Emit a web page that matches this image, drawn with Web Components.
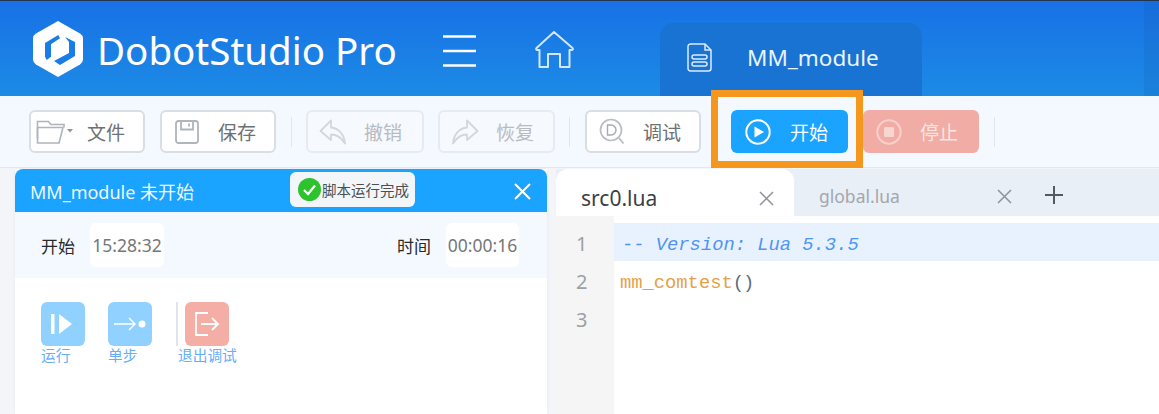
<!DOCTYPE html>
<html lang="zh"><head><meta charset="utf-8"><title>DobotStudio Pro</title>
<style>
html,body{margin:0;padding:0;height:414px;overflow:hidden;background:#f3f5f8;font-family:"Noto Sans","Noto Sans CJK SC",sans-serif}
</style></head><body>
<app-shell></app-shell>
<script>
const FONT='"Noto Sans","Noto Sans CJK SC",sans-serif';
function el(name,css,html){
  customElements.define(name,class extends HTMLElement{
    connectedCallback(){
      if(this.shadowRoot)return;
      const r=this.attachShadow({mode:'open'});
      r.innerHTML='<style>'+css+'</style>'+(typeof html==='function'?html(this):html);
    }
  });
}
const icons={
 folder:'<svg width="44" height="30" viewBox="0 0 44 30" fill="none"><path d="M1.500 22V4.500h11l2.500 3H28v3" stroke="#aeb4bc" stroke-width="1.600"/><path d="M1.500 26.500V10.500H27l-4 15.500H1.500" stroke="#aeb4bc" stroke-width="1.600" stroke-linejoin="round"/><path d="M31 12h6l-3 3.500z" fill="#8f959c"/></svg>',
 save:'<svg width="24" height="24" viewBox="0 0 24 24" fill="none"><rect x="1" y="1" width="22" height="22" rx="2.500" stroke="#b0b5bc" stroke-width="1.800"/><path d="M6 1v8.500h12V1M14 3.500v3" stroke="#b0b5bc" stroke-width="1.800"/></svg>',
 undo:'<svg width="28" height="26" viewBox="0 0 28 26" fill="none"><path d="M12 1.500L1.500 12 12 21v-5.500c5.500 0 10 2.500 14 9-.5-8-6-15.500-14-16z" stroke="#d3d7dc" stroke-width="1.800" stroke-linejoin="round"/></svg>',
 redo:'<svg width="28" height="26" viewBox="0 0 28 26" fill="none"><path d="M16 1.500L26.500 12 16 21v-5.500c-5.500 0-10 2.500-14 9 .5-8 6-15.500 14-16z" stroke="#d3d7dc" stroke-width="1.800" stroke-linejoin="round"/></svg>',
 debug:'<svg width="26" height="28" viewBox="0 0 26 28" fill="none"><circle cx="12" cy="12" r="10.500" stroke="#b9bdc3" stroke-width="1.700"/><path d="M20 20l4.500 5.500" stroke="#b9bdc3" stroke-width="1.800"/><path d="M8.500 7H12a5 5 0 0 1 0 10H8.500z" stroke="#a4a9b0" stroke-width="1.400"/></svg>',
 play:'<svg width="26" height="26" viewBox="0 0 26 26" fill="none"><circle cx="13" cy="13" r="11.700" stroke="#fff" stroke-width="2"/><path d="M9.500 7.500l9.500 5.500-9.500 5.500z" fill="#fff"/></svg>',
 stop:'<svg width="26" height="26" viewBox="0 0 26 26" fill="none"><circle cx="13" cy="13" r="11.700" stroke="#f7d0cb" stroke-width="2"/><rect x="8" y="8" width="10" height="10" rx="1" fill="#f7d5d1"/></svg>'
};
el('tool-button',`
:host{display:flex;box-sizing:border-box;width:var(--w,116px);height:43px;flex:none;align-items:center;border:2px solid #d9dde4;border-radius:6px;background:#fff;color:#6d7074;font:19px ${FONT};overflow:hidden}
:host([kind=ghost]){background:#f6f9fd;border-color:#e7ebf1;color:#b8bcc1}
:host([kind=go]){background:#1aa3ff;border:0;color:#fff}
:host([kind=halt]){background:#f1aca5;border:0;color:#fbe6e3}
.i{flex:none;width:var(--iw,56px);padding-right:6px;display:flex;justify-content:center;align-items:center;box-sizing:border-box}
:host([icon=folder]) .i{width:50px;justify-content:flex-start;padding:0 0 0 5px}
.t{flex:1;white-space:nowrap}
:host([icon=folder]) .t{padding-left:6px}
`,h=>`<span class="i">${icons[h.getAttribute('icon')]}</span><span class="t"><slot></slot></span>`);
el('tool-sep',`:host{display:block;width:1px;height:30px;background:#e2e6ec;flex:none}`,'');
el('top-bar',`
:host{display:flex;box-sizing:border-box;height:96px;align-items:stretch;padding-top:1px;background:linear-gradient(#1871e6,#1c8be5);border-top:1px solid #24344d;position:relative;color:#fff}
.logo{margin:19px 0 0 33px;flex:none;width:50px;height:56px}
.name{margin:20px 0 0 14px;font-size:38.500px;line-height:56px;width:301px;white-space:nowrap}
.menu{margin:33px 0 0 45px;width:33px;height:32px;flex:none}
.home{margin:28px 0 0 58px;width:40px;height:40px;flex:none}
.tab{margin:21px 0 0 86px;width:262px;flex:none;background:#1873d2;border-radius:14px 14px 0 0;display:flex;align-items:center;padding-bottom:4px;box-sizing:border-box}
.tab svg{margin-left:27px;flex:none}
.tab span{margin-left:35px;font-size:22.500px;color:#eaf3fd}
.edge{position:absolute;right:0;top:0;bottom:0;width:15px;background:rgba(20,90,170,.18)}
`,`<svg class="logo" viewBox="0 0 50 56"><path fill="#fff" d="M25 0l22 12.500q3 1.800 3 5v21q0 3.200-3 5L25 56 3 43.500q-3-1.800-3-5v-21q0-3.200 3-5z"/><path fill="#1a7ce6" d="M12 22L25.300 14 27 17.300 18 23.300V35.700L13.700 39 12 35.700zM32 16L42 21V35L27 44 21 40 36 32V21z"/></svg>
<div class="name">DobotStudio Pro</div>
<svg class="menu" viewBox="0 0 33 32"><path d="M0 1.500h33M0 16h33M0 30.500h33" stroke="#fff" stroke-width="2.600"/></svg>
<svg class="home" viewBox="0 0 40 40" fill="none" stroke="#d5e7fc" stroke-width="2" stroke-linejoin="round"><path d="M20 2L2.500 18q-1 2 1 2H5.500V37H14V24H26V37H35.500V20H37.500q2 0 1-2z"/></svg>
<div class="tab"><svg width="25" height="29" viewBox="0 0 25 29" fill="none" stroke="#dcebfb" stroke-width="1.500"><path d="M3.500 1h14.500l6 6v18.500a2.500 2.500 0 0 1-2.500 2.500H3.500A2.500 2.500 0 0 1 1 25.500v-22A2.500 2.500 0 0 1 3.500 1z"/><path d="M18 1v6h6"/><rect x="5" y="12" width="15" height="4" rx="2"/><rect x="5" y="19" width="15" height="4" rx="2"/></svg><span>MM_module</span></div>
<div class="edge"></div>`);
el('tool-bar',`
:host{display:flex;box-sizing:border-box;height:72px;background:#f3f9ff;padding:14px 0 0 29px;align-items:flex-start;gap:15px;position:relative;z-index:1;border-bottom:1px solid #e4e8ee}
.box{position:absolute;left:711px;top:-6px;width:152px;height:78px;box-sizing:border-box;border:7px solid #f6971d;pointer-events:none}
tool-sep{margin-top:7px}
`,`<tool-button icon="folder">文件</tool-button><tool-button icon="save">保存</tool-button><tool-sep></tool-sep>
<tool-button icon="undo" kind="ghost" style="--w:118px;margin-left:-1px">撤销</tool-button><tool-button icon="redo" kind="ghost" style="--w:117px;margin-left:-1px">恢复</tool-button><tool-sep style="margin-left:-1px"></tool-sep>
<tool-button icon="debug">调试</tool-button><tool-button icon="play" kind="go" style="--w:117px;margin-left:15px;--iw:59px">开始</tool-button><tool-button icon="stop" kind="halt" style="--w:116px;--iw:57px">停止</tool-button><tool-sep></tool-sep>
<div class="box"></div>`);
el('run-action',`
:host{display:flex;flex-direction:column;flex:none;color:#66adf8;font:14.700px/17px ${FONT};white-space:nowrap}
:host([danger]){align-items:center}
.b{width:44px;height:44px;border-radius:6px;background:#91d1ff;display:flex;align-items:center;justify-content:center;margin-bottom:1px}
:host([danger]) .b{background:#f5aea6}
`,`<div class="b"><slot name="i"></slot></div><slot></slot>`);
el('debug-panel',`
:host{display:flex;flex-direction:column;flex:none;width:532px;background:#fff;box-shadow:0 0 3px #e4e8ee}
.head{height:43px;background:#1aa3ff;border-radius:8px 8px 0 0;display:flex;align-items:center;color:#eef8ff;position:relative;box-sizing:border-box;padding-left:15px;font-size:18px;white-space:nowrap}
.toast{position:absolute;left:275px;top:3px;width:125px;height:35px;box-sizing:border-box;background:#f3f6f9;border-radius:6px;display:flex;align-items:center;padding-left:8px;color:#4c4f52;font-size:14.500px;white-space:nowrap}
.toast svg{flex:none;margin-right:1px}
.x{position:absolute;left:499px;top:14px}
.info{height:66px;background:#f3f9ff;display:flex;align-items:center;box-sizing:border-box;padding:0 0 0 26px;font-size:17px;color:#2a2a2a}
.v{background:#fff;border-radius:6px;height:44px;width:74px;display:flex;align-items:center;justify-content:center;color:#74777b;font-size:17.500px;margin-left:15px;white-space:nowrap}
.gap{flex:1}
.v.e{margin:0 28px 0 15px;width:73px}
.act{display:flex;padding:24px 0 0 26px;height:114px;box-sizing:border-box;align-items:flex-start}
.s{width:2px;height:44px;background:#e0e5eb;flex:none}
`,`<div class="head">MM_module 未开始
<div class="toast"><svg width="23" height="23" viewBox="0 0 23 23"><circle cx="11.500" cy="11.500" r="11.500" fill="#2dc32d"/><path d="M6 12l4 4 7-8.500" fill="none" stroke="#fff" stroke-width="2.200"/></svg>脚本运行完成</div>
<svg class="x" width="17" height="17" viewBox="0 0 17 17"><path d="M1 1l15 15M16 1L1 16" stroke="#fff" stroke-width="2"/></svg></div>
<div class="info"><span>开始</span><span class="v">15:28:32</span><span class="gap"></span><span>时间</span><span class="v e">00:00:16</span></div>
<div class="act">
<run-action style="width:67px"><svg slot="i" width="24" height="24" viewBox="0 0 24 24"><rect x="0" y="2" width="3.500" height="20" fill="#fff"/><path d="M8 2l13 10L8 22z" fill="#fff"/></svg>运行</run-action>
<run-action style="width:68px"><svg slot="i" width="32" height="16" viewBox="0 0 32 16" fill="none" stroke="#fff" stroke-width="1.400"><path d="M0 8h20M15 2l6 6-6 6"/><circle cx="28" cy="8" r="3.500" fill="#fff" stroke="none"/></svg>单步</run-action>
<div class="s"></div>
<run-action danger><svg slot="i" width="26" height="26" viewBox="0 0 26 26" fill="none" stroke="#fff" stroke-width="1.800"><path d="M14 2H2v22h12M7 13h17M18 7l6 6-6 6"/></svg>退出调试</run-action>
</div>`);
el('code-line',`
:host{display:flex;height:38px;flex:none}
.n{width:58px;flex:none;background:#f5f5f5;color:#9ca0a5;font:20px/42px ${FONT};box-sizing:border-box;padding-left:20px}
.c{flex:1;font:18.800px/44px "Liberation Mono",monospace;padding-left:6px;white-space:pre;color:#e3a24a;overflow:hidden}
:host([active]) .c{background:#e8f2ff;color:#4f95f2;font-style:italic;padding-left:8px}
::slotted(b){font-weight:normal;color:#5a6a80;letter-spacing:-1px}
`,h=>`<div class="n">${h.getAttribute('n')}</div><div class="c"><slot></slot></div>`);
el('code-editor',`
:host{display:flex;flex-direction:column;flex:1;min-width:0;background:#fff}
.tabs{display:flex;height:47px;background:#e9eff6;align-items:stretch;flex:none}
.t{display:flex;align-items:center;box-sizing:border-box;width:238px;padding:10px 0 0 25px;background:#fff;border-radius:12px 12px 0 0;font-size:21px;color:#3d4044;position:relative;flex:none}
.t.o{width:250px;background:none;border-radius:0;color:#a3a7ac;font-size:17.500px;padding-top:6px}
.t svg{position:absolute;left:203px;top:22px}
.t.o svg{left:203px;top:20px}
.plus{margin:17px 0 0 1px;flex:none}
.gut{height:7px;flex:none;display:flex}.gut i{width:58px;background:#f5f5f5}
.fill{flex:1;display:flex}.fill i{width:58px;background:#f5f5f5}
`,`<div class="tabs"><div class="t">src0.lua<svg width="15" height="15" viewBox="0 0 15 15"><path d="M1 1l13 13M14 1L1 14" stroke="#8f9296" stroke-width="1.500"/></svg></div>
<div class="t o">global.lua<svg width="15" height="15" viewBox="0 0 15 15"><path d="M1 1l13 13M14 1L1 14" stroke="#8f9296" stroke-width="1.500"/></svg></div><svg class="plus" width="18" height="18" viewBox="0 0 18 18"><path d="M0 9h18M9 0v18" stroke="#55585c" stroke-width="2"/></svg></div>
<div class="gut"><i></i></div>
<code-line n="1" active>-- Version: Lua 5.3.5</code-line>
<code-line n="2">mm_comtest<b>()</b></code-line>
<code-line n="3"></code-line>
<div class="fill"><i></i></div>`);
el('app-shell',`
:host{display:flex;flex-direction:column;width:1159px;height:414px;overflow:hidden;font-family:${FONT}}
.main{display:flex;flex:1;min-height:0;padding:1px 0 0 15px;gap:9px;background:#f3f5f8}
`,`<top-bar></top-bar><tool-bar></tool-bar><div class="main"><debug-panel></debug-panel><code-editor></code-editor></div>`);
</script></body></html>
